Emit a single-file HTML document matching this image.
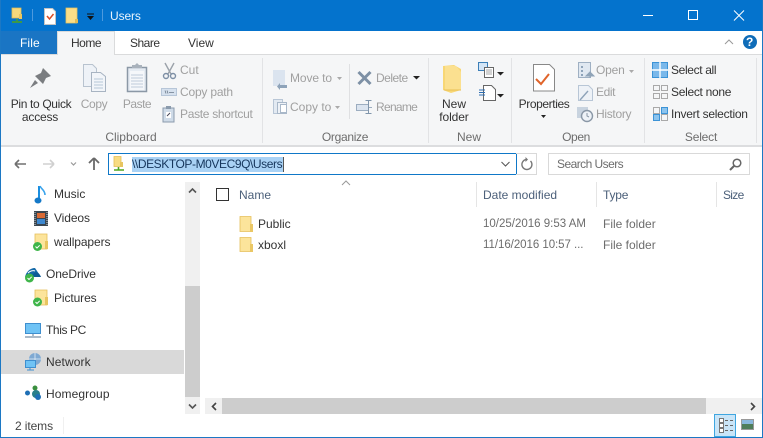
<!DOCTYPE html>
<html><head><meta charset="utf-8"><style>
html,body{margin:0;padding:0;background:#fff}
#w{position:relative;width:763px;height:438px;overflow:hidden;background:#fff;font-family:"Liberation Sans",sans-serif;font-size:12px;color:#333}
#w div,#w svg{position:absolute}
.t{white-space:nowrap;line-height:14px}
.g{color:#a0a0a0}
.c{text-align:center}
.f{color:#6d6d6d}
</style></head><body><div id="w">
<div style="left:0;top:0;width:763px;height:31px;background:#0473cd"></div>
<div style="left:0;top:31px;width:763px;height:23px;background:#fff"></div>
<div style="left:1px;top:31px;width:56px;height:23px;background:#1a75c4"></div>
<div style="left:57px;top:31px;width:58px;height:24px;background:#f5f6f7;border:1px solid #dadbdc;border-bottom:0;box-sizing:border-box"></div>
<div style="left:1px;top:54px;width:761px;height:1px;background:#dadbdc"></div>
<div style="left:58px;top:54px;width:56px;height:1px;background:#f5f6f7"></div>
<div style="left:1px;top:55px;width:761px;height:90px;background:#f5f6f7"></div>
<div style="left:1px;top:145px;width:761px;height:2px;background:#dcdddf"></div>
<div style="left:0;top:0;width:1px;height:438px;background:#1c78c4"></div>
<div style="left:762px;top:0;width:1px;height:438px;background:#1c78c4"></div>
<div style="left:0;top:437px;width:763px;height:1px;background:#1c78c4"></div>

<!-- title icons -->
<svg style="left:0;top:0" width="130" height="31" viewBox="0 0 130 31">
<path d="M12 8h9v10h-9z" fill="#f6d97c" stroke="#e3bd55" stroke-width=".8"/><path d="M19 14h3v5h-3z" fill="#e8c560"/><path d="M17 19v2M12 22h10" stroke="#4fa51f" stroke-width="1.600" fill="none"/>
<path d="M32.500 9v12" stroke="#4d9ade"/>
<path d="M44.500 8.500h8l3 3v13h-11z" fill="#fff" stroke="#c4c4c4"/><path d="M47 16l2.500 3 4-5" stroke="#dc4c24" stroke-width="1.500" fill="none"/>
<path d="M66 8h11v15h-11z" fill="#fbde88" stroke="#e7c35f" stroke-width=".8"/><path d="M75 19h3v4h-3z" fill="#e2bc56"/>
<path d="M87 14h7" stroke="#111" stroke-width="1"/><path d="M87 16h7l-3.500 4z" fill="#111"/>
<path d="M102.500 9v12" stroke="#4d9ade"/>
</svg>
<div class="t" style="left:110px;top:9px;color:#e8f3fc;letter-spacing:-.1px">Users</div>
<!-- window controls -->
<svg style="left:640px;top:0" width="123" height="31">
<path d="M3 15.500h10" stroke="#fff"/><rect x="48.500" y="10.500" width="9" height="9" fill="none" stroke="#fff"/><path d="M94 10.500l10 10M104 10.500l-10 10" stroke="#fff"/>
</svg>
<!-- tabs -->
<div class="t" style="left:20px;top:36px;color:#fff;letter-spacing:.1px">File</div>
<div class="t" style="left:71px;top:36px;color:#333;letter-spacing:-.5px">Home</div>
<div class="t" style="left:130px;top:36px;color:#333;letter-spacing:-.5px">Share</div>
<div class="t" style="left:188px;top:36px;color:#333">View</div>
<svg style="left:720px;top:33px" width="42" height="20">
<path d="M5 11l4-4 4 4" stroke="#999" fill="none"/><circle cx="30" cy="9" r="7" fill="#0f6cb8"/>
</svg>
<div class="t" style="left:746px;top:35px;color:#fff;font-weight:bold">?</div>

<!-- ribbon group separators -->
<div style="left:262px;top:58px;width:1px;height:85px;background:#e2e3e5"></div>
<div style="left:428px;top:58px;width:1px;height:85px;background:#e2e3e5"></div>
<div style="left:511px;top:58px;width:1px;height:85px;background:#e2e3e5"></div>
<div style="left:644px;top:58px;width:1px;height:85px;background:#e2e3e5"></div>
<div style="left:756px;top:58px;width:1px;height:85px;background:#e2e3e5"></div>
<div style="left:349px;top:64px;width:1px;height:55px;background:#dfe0e2"></div>

<!-- Clipboard -->
<svg style="left:0;top:55px" width="262" height="80" viewBox="0 55 262 80">
<path d="M43 68l8 8-5 2-3 6-8-8 6-3zM35 80l-5 8 8-5z" fill="#7a7d80"/>
<path d="M83.500 64.500h9l4 4v18h-13z" fill="#eef2f7" stroke="#b8c3cf"/>
<path d="M91.500 72.500h9l5 4v15h-14z" fill="#f2f5f9" stroke="#a8b4c2"/><path d="M94 79h9M94 82h9M94 85h9M94 88h9" stroke="#b7c6d6"/>
<rect x="127.500" y="67.500" width="19" height="24" fill="#e6ecf3" stroke="#8b98a6" stroke-width="1.500"/><path d="M130 71h14v19h-14z" fill="#f5f7fa"/><path d="M131 75h12M131 78h12M131 81h12M131 84h12M131 87h12" stroke="#bfcbd9"/><path d="M132 68v-3h3l2-2 2 2h3v3z" fill="#a9b2bc"/>
<path d="M165 63l6 11M174 63l-6 11" stroke="#9ba2aa" stroke-width="1.400"/><circle cx="166" cy="76" r="2.500" fill="none" stroke="#7d8fa5" stroke-width="1.400"/><circle cx="173" cy="76" r="2.500" fill="none" stroke="#7d8fa5" stroke-width="1.400"/>
<rect x="161.500" y="88.500" width="15" height="7" fill="#d6e1ee" stroke="#b7c6d8"/><path d="M165 90.500l1 3M167 90.500l1 3M169 92.500h5" stroke="#6c7a8a" stroke-width=".8"/>
<rect x="163" y="108" width="11" height="14" fill="#cfdbe8" stroke="#8b9bad"/><path d="M166 106h5v3h-5z" fill="#8b9bad"/><rect x="166" y="112" width="5" height="6" fill="#fff"/><path d="M167 116l3-3" stroke="#445"/>
</svg>
<div class="t c" style="left:2px;top:97px;width:78px;color:#333;letter-spacing:-.35px">Pin to Quick</div>
<div class="t c" style="left:2px;top:110px;width:76px;color:#333;letter-spacing:-.2px">access</div>
<div class="t g c" style="left:78px;top:97px;width:32px;letter-spacing:-.4px">Copy</div>
<div class="t g c" style="left:118px;top:97px;width:38px;letter-spacing:-.5px">Paste</div>
<div class="t g" style="left:180px;top:63px">Cut</div>
<div class="t g" style="left:180px;top:85px;letter-spacing:-.2px">Copy path</div>
<div class="t g" style="left:180px;top:107px;letter-spacing:-.3px">Paste shortcut</div>
<div class="t c f" style="left:90px;top:130px;width:82px">Clipboard</div>

<!-- Organize -->
<svg style="left:262px;top:55px" width="168" height="80" viewBox="262 55 168 80">
<rect x="273" y="70" width="12" height="16" fill="#dbe4ef"/><path d="M287 85h-7v-2l-3 3.500 3 3.500v-2h7z" fill="#8ea3b9"/>
<rect x="273.500" y="99.500" width="9" height="14" fill="#e3eaf2" stroke="#b8c6d6"/><rect x="277.500" y="102.500" width="9" height="11" fill="#eef2f7" stroke="#a9b8c9"/><rect x="280.500" y="104.500" width="6" height="8" fill="#fff" stroke="#a9b8c9"/>
<path d="M358.500 72l12 12M370.500 72l-12 12" stroke="#7d90a5" stroke-width="3"/>
<rect x="356.500" y="104.500" width="12" height="6" fill="#dbe4ef" stroke="#9cadc0"/><path d="M369 107.500h3" stroke="#9cadc0"/><path d="M368.500 101v12M365.500 100.500h6M365.500 113.500h6" stroke="#8095ab"/>
<path d="M337 77h5l-2.500 3z" fill="#aaa"/><path d="M335 106h5l-2.500 3z" fill="#aaa"/><path d="M413 76h7l-3.500 3.500z" fill="#222"/>
</svg>
<div class="t g" style="left:290px;top:71px;letter-spacing:-.1px">Move to</div>
<div class="t g" style="left:290px;top:100px">Copy to</div>
<div class="t g" style="left:376px;top:71px;letter-spacing:-.5px">Delete</div>
<div class="t g" style="left:376px;top:100px;letter-spacing:-.7px">Rename</div>
<div class="t c f" style="left:300px;top:130px;width:90px;letter-spacing:-.3px">Organize</div>

<!-- New -->
<svg style="left:430px;top:55px" width="82" height="70" viewBox="430 55 82 70">
<path d="M443 66l11-1 7 4v21l-10 3-8-3z" fill="#f8d775"/><path d="M445 66h11l5 6v18h-16z" fill="#fce49b" opacity=".7"/><path d="M444 90h17" stroke="#e8bf55"/>
<rect x="478.500" y="62.500" width="9" height="8" fill="#d3e5f6" stroke="#3c7fb8"/><rect x="484.500" y="67.500" width="9" height="10" fill="#fff" stroke="#666"/><path d="M486 70h6M486 72h6M486 74h6" stroke="#888" stroke-width=".7"/>
<path d="M497 72h7l-3.500 3.500z" fill="#222"/>
<path d="M483.500 85.500h8l4 4v11h-12z" fill="#fff" stroke="#666"/><path d="M479 90h6M479 92.500h6M479 95h6" stroke="#2f6fb3"/>
<path d="M497 94h7l-3.500 3.500z" fill="#222"/>
</svg>
<div class="t c" style="left:433px;top:97px;width:42px">New</div>
<div class="t c" style="left:433px;top:110px;width:42px;letter-spacing:-.1px">folder</div>
<div class="t c f" style="left:450px;top:130px;width:38px">New</div>

<!-- Open -->
<svg style="left:512px;top:55px" width="134" height="85" viewBox="512 55 134 85">
<path d="M533.500 64.500h16l5 5v21.500h-21z" fill="#fff" stroke="#888"/><path d="M536 79l5 5 8-10" stroke="#e0642a" stroke-width="2" fill="none"/>
<path d="M541 115h5l-2.500 3z" fill="#222"/>
<rect x="578.500" y="62.500" width="12" height="15" fill="#e0e8f1" stroke="#9fb0c3"/><path d="M581 66h2v2h-2zM581 70h2v2h-2zM581 74h2v2h-2z" fill="#8ea3b9"/><path d="M590 78v-6l-4 4h8l-4-4" fill="#90a4b8" stroke="#90a4b8"/>
<path d="M578.500 85.500h10l4 4v11h-14z" fill="#eef2f7" stroke="#b8c6d6"/><path d="M580 100l8-9" stroke="#8ea3b9" stroke-width="1.400"/>
<rect x="577" y="107" width="11" height="11" fill="#c8d3df"/><circle cx="587" cy="116" r="5.500" fill="#eef2f7" stroke="#8a97a6" stroke-width="1.400"/><path d="M587 113v3l2 1" stroke="#8a97a6" fill="none"/>
<path d="M629 70h5l-2.500 3z" fill="#aaa"/>
</svg>
<div class="t c" style="left:514px;top:97px;width:60px;color:#333;letter-spacing:-.4px">Properties</div>
<div class="t g" style="left:596px;top:63px;letter-spacing:-.2px">Open</div>
<div class="t g" style="left:596px;top:85px;letter-spacing:-.4px">Edit</div>
<div class="t g" style="left:596px;top:107px;letter-spacing:-.3px">History</div>
<div class="t c f" style="left:556px;top:130px;width:40px;letter-spacing:-.4px">Open</div>

<!-- Select -->
<svg style="left:646px;top:55px" width="30" height="70" viewBox="646 55 30 70">
<rect x="652.500" y="62.500" width="15" height="15" fill="#7ab8ea" stroke="#3c93d6"/><path d="M660 62v16M652 70h16" stroke="#fff" stroke-width="1.400"/>
<path d="M653.500 85.500h6v5h-6zM661.500 85.500h6v5h-6zM653.500 93.500h6v5h-6zM661.500 93.500h6v5h-6z" fill="none" stroke="#a9a9a9"/>
<path d="M653.500 107.500h6v6h-6z" fill="none" stroke="#a9a9a9"/>
<rect x="661.500" y="107.500" width="6" height="6" fill="#8cc4ee" stroke="#3c93d6"/><rect x="653.500" y="114.500" width="6" height="6" fill="#8cc4ee" stroke="#3c93d6"/><rect x="661.500" y="114.500" width="6" height="6" fill="none" stroke="#a9a9a9"/>
</svg>
<div class="t" style="left:671px;top:63px;letter-spacing:-.35px">Select all</div>
<div class="t" style="left:671px;top:85px;letter-spacing:-.3px">Select none</div>
<div class="t" style="left:671px;top:107px;letter-spacing:-.25px">Invert selection</div>
<div class="t c f" style="left:672px;top:130px;width:58px;letter-spacing:-.2px">Select</div>

<!-- Address row -->
<svg style="left:10px;top:150px" width="100" height="28" viewBox="10 150 100 28">
<path d="M15 164h11M15 164l4-4M15 164l4 4" stroke="#707070" stroke-width="1.600" fill="none"/>
<path d="M43 164h11M54 164l-4-4M54 164l-4 4" stroke="#d0d0d0" stroke-width="1.600" fill="none"/>
<path d="M71 162.500l2.500 2.500 2.500-2.500" stroke="#9a9a9a" stroke-width="1.200" fill="none"/>
<path d="M94 170v-11M94 158l-5 5M94 158l5 5" stroke="#6a6a6a" stroke-width="1.800" fill="none"/>
</svg>
<div style="left:108px;top:153px;width:409px;height:22px;border:1px solid #0f78c8;box-sizing:border-box;background:#fff"></div>
<svg style="left:110px;top:154px" width="20" height="20">
<path d="M4 2.500h7v10h-7z" fill="#f8dc82" stroke="#e3bd55" stroke-width=".8"/><path d="M10 8h3v5h-3z" fill="#e8c560"/><path d="M8.500 13v2.500M4 16h10" stroke="#4fa51f" stroke-width="1.600" fill="none"/>
</svg>
<div style="left:132px;top:157px;width:151px;height:15px;background:#a9d2f5"></div>
<div style="left:283px;top:157px;width:1px;height:15px;background:#555"></div>
<div class="t" style="left:132px;top:157px;width:151px;color:#16365c;letter-spacing:-.42px">\\DESKTOP-M0VEC9Q\Users</div>
<svg style="left:499px;top:158px" width="14" height="12"><path d="M2.500 4l4 4 4-4" stroke="#555" fill="none"/></svg>
<div style="left:516px;top:153px;width:21px;height:22px;border:1px solid #d9d9d9;border-left:0;box-sizing:border-box"></div>
<svg style="left:519px;top:156px" width="16" height="16"><path d="M11.500 5a5 5 0 1 1-4-1.500" stroke="#777" stroke-width="1.400" fill="none"/><path d="M6.500 1l2.500 2.500-2.500 2.500z" fill="#777"/></svg>
<div style="left:548px;top:153px;width:202px;height:22px;border:1px solid #d9d9d9;box-sizing:border-box"></div>
<div class="t" style="left:557px;top:157px;color:#6d6d6d;letter-spacing:-.55px">Search Users</div>
<svg style="left:728px;top:156px" width="16" height="16"><circle cx="9" cy="7" r="3.800" fill="none" stroke="#666" stroke-width="1.500"/><path d="M6 10l-4 4" stroke="#666" stroke-width="2"/></svg>

<!-- Left nav -->
<div style="left:1px;top:350px;width:183px;height:24px;background:#d9d9d9"></div>
<svg style="left:20px;top:180px" width="40" height="225" viewBox="20 180 40 225">
<path d="M39 186v15" stroke="#1a8ee0" stroke-width="2"/><ellipse cx="38" cy="200.500" rx="3.500" ry="3" fill="#1579c8"/><path d="M40 186c1 3 5 4 5 9" stroke="#3ba4ec" stroke-width="1.600" fill="none"/>
<rect x="34" y="211" width="14" height="15" fill="#3a4650"/><rect x="37" y="213" width="8" height="5" fill="#d96a35"/><rect x="37" y="219" width="8" height="5" fill="#3d88d0"/><path d="M35 212v13M47 212v13" stroke="#cfd3d6" stroke-dasharray="1 1"/>
<path d="M35 234h12v15h-12z" fill="#fce49b" stroke="#e5bf5a" stroke-width=".8"/><path d="M45 241h3v8h-3z" fill="#e8c560"/><circle cx="37.500" cy="246.500" r="4.500" fill="#3fb54a"/><path d="M35.500 246.500l1.500 1.500 2.700-2.700" stroke="#fff" fill="none"/>
<path d="M25 277c1-5 5-9 10-9l6 9z" fill="#1469a8"/><path d="M33 274c3-3 6-2 8 3h-9z" fill="#0e5a96"/><path d="M28 273c2-2 5-3 7-2" stroke="#fff" fill="none"/><circle cx="29.500" cy="278" r="4.500" fill="#3fb54a"/><path d="M27.500 278l1.500 1.500 2.700-2.700" stroke="#fff" fill="none"/>
<path d="M35 290h12v15h-12z" fill="#fce49b" stroke="#e5bf5a" stroke-width=".8"/><path d="M45 297h3v8h-3z" fill="#e8c560"/><circle cx="37.500" cy="302" r="4.500" fill="#3fb54a"/><path d="M35.500 302l1.500 1.500 2.700-2.700" stroke="#fff" fill="none"/>
<rect x="25.500" y="323.500" width="15" height="10" fill="#6fc3f5" stroke="#3f8fcf"/><path d="M33 334v2M25 337h16" stroke="#8fa3b5" stroke-width="1.400"/>
<circle cx="35" cy="359" r="6" fill="#7fa9d2"/><path d="M35 353v12M29 359h12" stroke="#e4eef7" stroke-width=".8"/><rect x="25.500" y="360.500" width="10" height="7" fill="#6fc3f5" stroke="#3f8fcf"/><path d="M30 368v1.500M27 370h7" stroke="#3f8fcf"/>
<circle cx="27.500" cy="393" r="2.500" fill="#1f6fb5"/><circle cx="35" cy="388" r="2.500" fill="#3a8f3f"/><circle cx="36" cy="394" r="4" fill="#2a7f8a"/><circle cx="38" cy="397" r="3" fill="#1f6fb5"/>
</svg>
<div class="t" style="left:54px;top:187px">Music</div>
<div class="t" style="left:54px;top:211px;letter-spacing:-.1px">Videos</div>
<div class="t" style="left:54px;top:235px;letter-spacing:-.1px">wallpapers</div>
<div class="t" style="left:46px;top:267px;letter-spacing:-.1px">OneDrive</div>
<div class="t" style="left:54px;top:291px;letter-spacing:-.1px">Pictures</div>
<div class="t" style="left:46px;top:323px;letter-spacing:-.4px">This PC</div>
<div class="t" style="left:46px;top:355px;letter-spacing:.1px">Network</div>
<div class="t" style="left:46px;top:387px;letter-spacing:.1px">Homegroup</div>

<!-- vertical scrollbar -->
<div style="left:185px;top:182px;width:15px;height:232px;background:#f0f0f0"></div>
<div style="left:185px;top:286px;width:15px;height:111px;background:#cdcdcd"></div>
<svg style="left:185px;top:182px" width="15" height="232"><path d="M4 10.500l3.500-3.500 3.500 3.500" stroke="#555" stroke-width="1.600" fill="none"/><path d="M4 222.500l3.500 3.500 3.500-3.500" stroke="#555" stroke-width="1.600" fill="none"/></svg>

<!-- header -->
<svg style="left:335px;top:178px" width="20" height="10"><path d="M7 7l4-4 4 4" stroke="#999" fill="none"/></svg>
<div style="left:216px;top:188px;width:13px;height:13px;border:1px solid #333;box-sizing:border-box"></div>
<div class="t" style="left:239px;top:188px;color:#4c607a">Name</div>
<div style="left:476px;top:182px;width:1px;height:25px;background:#e5e5e5"></div>
<div class="t" style="left:483px;top:188px;color:#4c607a">Date modified</div>
<div style="left:596px;top:182px;width:1px;height:25px;background:#e5e5e5"></div>
<div class="t" style="left:603px;top:188px;color:#4c607a;letter-spacing:-.2px">Type</div>
<div style="left:716px;top:182px;width:1px;height:25px;background:#e5e5e5"></div>
<div class="t" style="left:723px;top:188px;color:#4c607a;letter-spacing:-.7px">Size</div>

<!-- rows -->
<svg style="left:238px;top:214px" width="18" height="40">
<path d="M2 2.500h11v15h-11z" fill="#fce49b" stroke="#e5bf5a" stroke-width=".8"/><path d="M12 10h3v8h-3z" fill="#eac765"/>
<path d="M2 23.500h11v14h-11z" fill="#fce49b" stroke="#e5bf5a" stroke-width=".8"/><path d="M12 30h3v8h-3z" fill="#eac765"/>
</svg>
<div class="t" style="left:258px;top:217px">Public</div>
<div class="t" style="left:258px;top:238px">xboxl</div>
<div class="t f" style="left:483px;top:217px;font-size:11.500px">10/25/2016 9:53 AM</div>
<div class="t f" style="left:483px;top:238px;font-size:11.500px;letter-spacing:-.05px">11/16/2016 10:57 ...</div>
<div class="t f" style="left:603px;top:217px">File folder</div>
<div class="t f" style="left:603px;top:238px">File folder</div>

<!-- horizontal scrollbar -->
<div style="left:205px;top:398px;width:557px;height:16px;background:#f0f0f0"></div>
<div style="left:222px;top:398px;width:484px;height:16px;background:#cdcdcd"></div>
<svg style="left:205px;top:398px" width="557" height="16"><path d="M11 5l-3.500 3.500 3.500 3.500" stroke="#444" stroke-width="1.600" fill="none"/><path d="M546 5l3.500 3.500-3.500 3.500" stroke="#444" stroke-width="1.600" fill="none"/></svg>

<!-- status -->
<div class="t" style="left:15px;top:419px;color:#444;letter-spacing:-.1px">2 items</div>
<div style="left:63px;top:417px;width:1px;height:17px;background:#f0f0f0"></div>
<div style="left:714px;top:414px;width:22px;height:23px;background:#c9e5f8;border:1px solid #3fa6e0;box-sizing:border-box"></div>
<svg style="left:714px;top:414px" width="48" height="23">
<path d="M5.500 4.500h4v4h-4zM5.500 9.500h4v4h-4zM5.500 14.500h4v4h-4z" fill="#fff" stroke="#777"/><path d="M11 6.500h3M16 6.500h3M11 11.500h3M16 11.500h3M11 16.500h3M16 16.500h3" stroke="#666"/>
<rect x="27.500" y="5.500" width="12" height="10" fill="#fff" stroke="#999"/><rect x="28" y="6" width="11" height="4" fill="#8ab8dd"/><rect x="28" y="10" width="11" height="5" fill="#4f7d5a"/>
</svg>
</div></body></html>
